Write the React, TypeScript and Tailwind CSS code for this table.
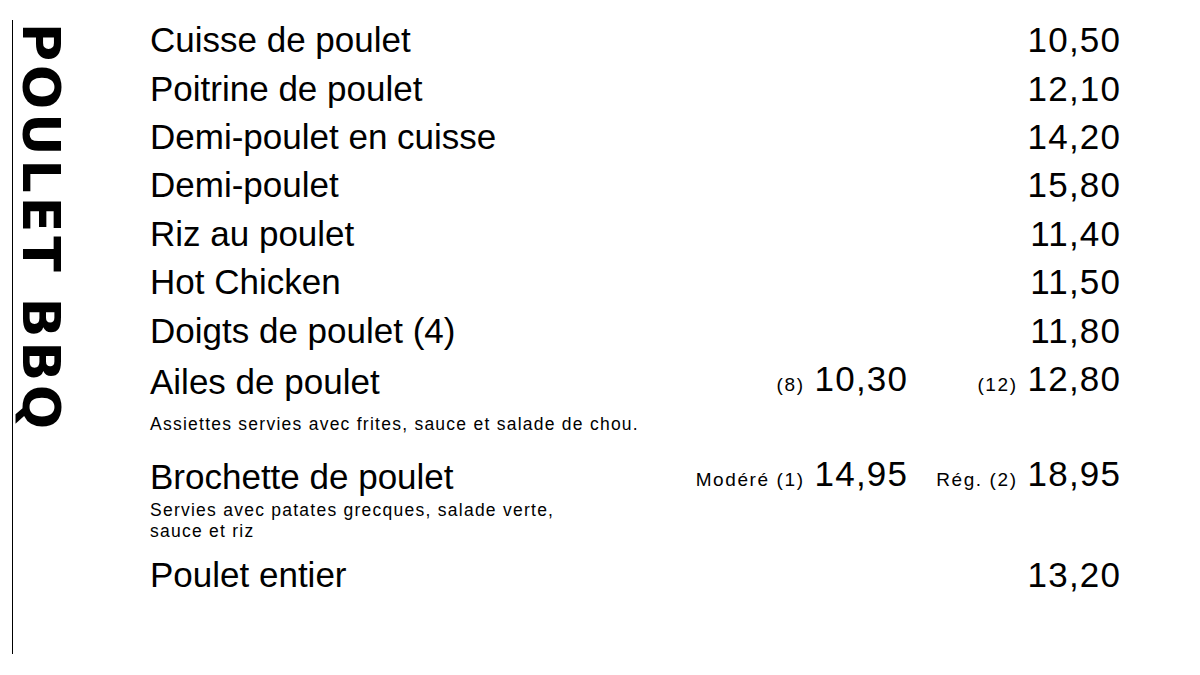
type Item = {
  name: string
  price?: string
  sizes?: { label: string; price: string }[]
}

const items: Item[] = [
  { name: 'Cuisse de poulet', price: '10,50' },
  { name: 'Poitrine de poulet', price: '12,10' },
  { name: 'Demi-poulet en cuisse', price: '14,20' },
  { name: 'Demi-poulet', price: '15,80' },
  { name: 'Riz au poulet', price: '11,40' },
  { name: 'Hot Chicken', price: '11,50' },
  { name: 'Doigts de poulet (4)', price: '11,80' },
  {
    name: 'Ailes de poulet',
    sizes: [
      { label: '(8)', price: '10,30' },
      { label: '(12)', price: '12,80' },
    ],
  },
]

function Price({ label, price }: { label?: string; price: string }) {
  return (
    <div className="flex items-baseline justify-end gap-[10px]">
      {label && <span className="text-[19px] tracking-[1.6px]">{label}</span>}
      <span className="-mr-[1.2px] tracking-[1.2px]">{price}</span>
    </div>
  )
}

function Row({ item }: { item: Item }) {
  return (
    <div className="grid h-[48.4px] grid-cols-[1fr_213px] items-center leading-[48.4px]">
      <div className="flex items-center justify-between">
        <span>{item.name}</span>
        {item.sizes && <Price label={item.sizes[0].label} price={item.sizes[0].price} />}
      </div>
      {item.price && <Price price={item.price} />}
      {item.sizes && <Price label={item.sizes[1].label} price={item.sizes[1].price} />}
    </div>
  )
}

export default function App() {
  return (
    <div
      className="flex h-[675px] w-[1200px] bg-white pl-[12px] pt-[20px] text-black"
      style={{ fontFamily: '"Liberation Sans", Arial, sans-serif' }}
    >
      <div className="h-[634px] w-[138px] shrink-0 border-l border-black">
        <h1
          className="ml-[2px] mt-[3px] text-[52px] font-bold leading-[52px] tracking-[4px] [writing-mode:vertical-rl]"
          style={{ fontFamily: '"DejaVu Sans", sans-serif' }}
        >
          POULET BBQ
        </h1>
      </div>

      <div className="w-[970px] text-[35px]">
        <div className="-mt-[3.7px]">
          {items.map((item) => (
            <Row key={item.name} item={item} />
          ))}
        </div>

        <p className="mt-[10.5px] text-[17.5px] leading-[20px] tracking-[1.25px]">
          Assiettes servies avec frites, sauce et salade de chou.
        </p>

        <div className="mt-[20px] grid grid-cols-[1fr_213px]">
          <div>
            <div className="flex items-center justify-between leading-[40px]">
              <span>Brochette de poulet</span>
              <Price label="Modéré (1)" price="14,95" />
            </div>
            <p className="w-[440px] text-[17.5px] leading-[21px] tracking-[1.25px]">
              Servies avec patates grecques, salade verte, sauce et riz
            </p>
          </div>
          <div className="leading-[40px]">
            <Price label="Rég. (2)" price="18,95" />
          </div>
        </div>

        <div className="mt-[9px]">
          <Row item={{ name: 'Poulet entier', price: '13,20' }} />
        </div>
      </div>
    </div>
  )
}
